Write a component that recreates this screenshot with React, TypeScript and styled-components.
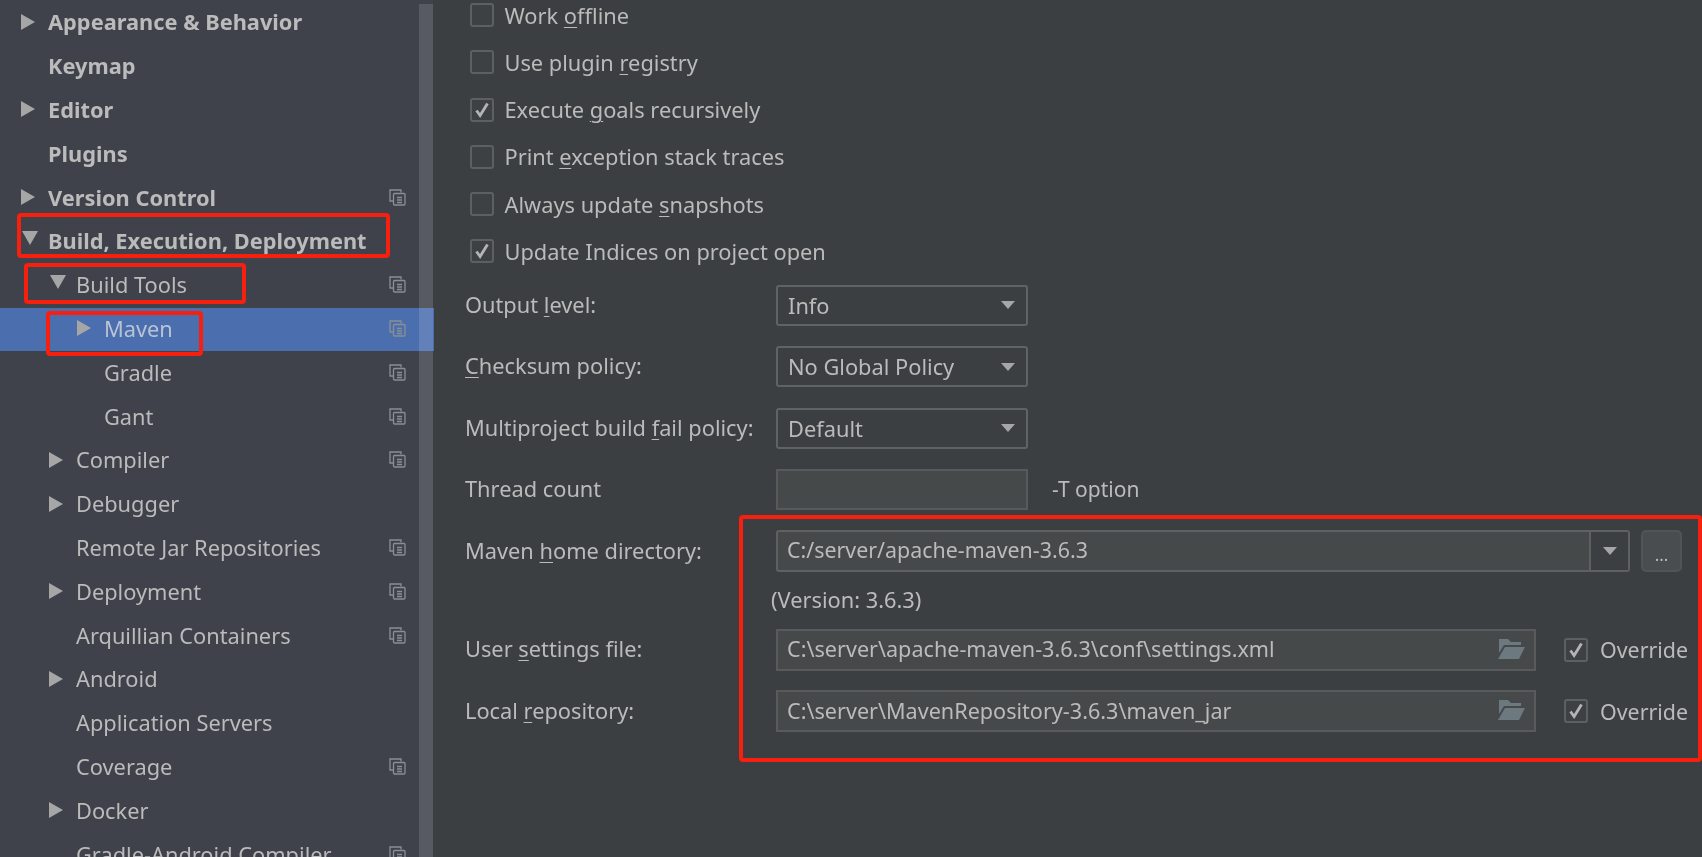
import styled, { createGlobalStyle } from "styled-components";

const GlobalStyle = createGlobalStyle`
    html, body {
        margin: 0;
        height: 100%;
        overflow: hidden;
        background-color: #3c3f41;
    }
`

type TreeItem = {
    label: string
    level: number
    arrow?: "right" | "down"
    copy?: boolean
    selected?: boolean
}

const tree: TreeItem[] = [
    {label: "Appearance & Behavior", level: 0, arrow: "right"},
    {label: "Keymap", level: 0},
    {label: "Editor", level: 0, arrow: "right"},
    {label: "Plugins", level: 0},
    {label: "Version Control", level: 0, arrow: "right", copy: true},
    {label: "Build, Execution, Deployment", level: 0, arrow: "down"},
    {label: "Build Tools", level: 1, arrow: "down", copy: true},
    {label: "Maven", level: 2, arrow: "right", copy: true, selected: true},
    {label: "Gradle", level: 2, copy: true},
    {label: "Gant", level: 2, copy: true},
    {label: "Compiler", level: 1, arrow: "right", copy: true},
    {label: "Debugger", level: 1, arrow: "right"},
    {label: "Remote Jar Repositories", level: 1, copy: true},
    {label: "Deployment", level: 1, arrow: "right", copy: true},
    {label: "Arquillian Containers", level: 1, copy: true},
    {label: "Android", level: 1, arrow: "right"},
    {label: "Application Servers", level: 1},
    {label: "Coverage", level: 1, copy: true},
    {label: "Docker", level: 1, arrow: "right"},
    {label: "Gradle-Android Compiler", level: 1, copy: true},
]

const CopyIcon = () => (
    <CopyGlyph viewBox="0 0 17 17" fill="none" stroke="#8b8e92" strokeWidth="1.3">
        <path d="M12 3.5V1H1v11h3"/>
        <rect x="4.5" y="4.5" width="11.5" height="11.5" rx="1"/>
        <path d="M8 8.5h5M8 11h5M8 13.5h5"/>
    </CopyGlyph>
)

const FolderIcon = () => (
    <FolderGlyph viewBox="0 0 27 20" fill="#6c7a80">
        <path d="M1 0h9l3 3h10v3H6L1 14z"/>
        <path d="M7 8h20l-6 12H0z"/>
    </FolderGlyph>
)

const Check = ({checked}: { checked?: boolean }) => (
    <CheckBox>
        {checked && (
            <svg width="16" height="16" viewBox="0 0 16 16" fill="none" stroke="#b4b4b4" strokeWidth="2.8">
                <path d="M2.5 8.5l3.6 5L13.5 1.5"/>
            </svg>
        )}
    </CheckBox>
)

const Select = ({value}: { value: string }) => (
    <SelectBox>
        <span>{value}</span>
        <Caret/>
    </SelectBox>
)

export default function App() {
    return (
        <Page>
            <GlobalStyle/>
            <Sidebar>
                {tree.map((item) => (
                    <Row key={item.label} $level={item.level} $selected={item.selected}>
                        <ArrowSlot>{item.arrow && <Arrow $down={item.arrow === "down"}/>}</ArrowSlot>
                        <RowLabel $bold={item.level === 0} $selected={item.selected}>{item.label}</RowLabel>
                        {item.copy && <CopyIcon/>}
                    </Row>
                ))}
                <Scrollbar/>
            </Sidebar>

            <Main>
                <CheckList>
                    <CheckRow><Check/><span>Work <u>o</u>ffline</span></CheckRow>
                    <CheckRow><Check/><span>Use plugin <u>r</u>egistry</span></CheckRow>
                    <CheckRow><Check checked/><span>Execute <u>g</u>oals recursively</span></CheckRow>
                    <CheckRow><Check/><span>Print <u>e</u>xception stack traces</span></CheckRow>
                    <CheckRow><Check/><span>Always update <u>s</u>napshots</span></CheckRow>
                    <CheckRow><Check checked/><span>Update Indices on project open</span></CheckRow>
                </CheckList>

                <Form>
                    <FormRow>
                        <Label>Output <u>l</u>evel:</Label>
                        <Select value="Info"/>
                    </FormRow>
                    <FormRow>
                        <Label><u>C</u>hecksum policy:</Label>
                        <Select value="No Global Policy"/>
                    </FormRow>
                    <FormRow>
                        <Label>Multiproject build <u>f</u>ail policy:</Label>
                        <Select value="Default"/>
                    </FormRow>
                    <FormRow>
                        <Label>Thread count</Label>
                        <ThreadInput/>
                        <Hint>-T option</Hint>
                    </FormRow>
                    <FormRow>
                        <Label>Maven <u>h</u>ome directory:</Label>
                        <HomeField>
                            <HomeValue>C:/server/apache-maven-3.6.3</HomeValue>
                            <HomeDrop><Caret/></HomeDrop>
                        </HomeField>
                        <DotsButton>...</DotsButton>
                    </FormRow>
                    <VersionRow>(Version: 3.6.3)</VersionRow>
                    <FormRow>
                        <Label>User <u>s</u>ettings file:</Label>
                        <PathField>
                            <span>C:\server\apache-maven-3.6.3\conf\settings.xml</span>
                            <FolderIcon/>
                        </PathField>
                        <OverrideRow><Check checked/><span>Override</span></OverrideRow>
                    </FormRow>
                    <FormRow>
                        <Label>Local <u>r</u>epository:</Label>
                        <PathField>
                            <span>C:\server\MavenRepository-3.6.3\maven_jar</span>
                            <FolderIcon/>
                        </PathField>
                        <OverrideRow><Check checked/><span>Override</span></OverrideRow>
                    </FormRow>
                </Form>
            </Main>

            <Highlight $x={17} $y={213} $w={373} $h={45}/>
            <Highlight $x={24} $y={263} $w={222} $h={41}/>
            <Highlight $x={46} $y={311} $w={157} $h={45}/>
            <Highlight $x={739} $y={515} $w={963} $h={247}/>
        </Page>
    );
};

const font = `"Noto Sans", "Open Sans", sans-serif`

const Page = styled.div`
    position: relative;
    display: flex;
    width: 1702px;
    height: 857px;
    overflow: hidden;
    background-color: #3c3f41;
    color: #bbbbbb;
    font-family: ${font};
    font-size: 21.8px;
    filter: blur(0.5px);

    u {
        text-underline-offset: 3px;
        text-decoration-thickness: 1px;
    }
`

const Sidebar = styled.nav`
    position: relative;
    flex: 0 0 434px;
    height: 857px;
    padding-top: 1px;
    box-sizing: border-box;
    overflow: hidden;
    background: linear-gradient(to right, #3f424b 433px, #3c3f41 433px);
`

const Row = styled.div<{ $level: number; $selected?: boolean }>`
    display: flex;
    align-items: center;
    box-sizing: border-box;
    height: 43.8px;
    padding-left: ${(p) => 21 + p.$level * 28}px;
    padding-right: 28px;
    padding-bottom: 2px;
    background-color: ${(p) => (p.$selected ? "#4b6eaf" : "transparent")};
`

const ArrowSlot = styled.span`
    display: flex;
    align-items: center;
    flex: 0 0 27px;
`

const Arrow = styled.i<{ $down?: boolean }>`
    display: block;
    width: 0;
    height: 0;
    ${(p) => p.$down
            ? `
        margin-left: 1px;
        border-left: 8px solid transparent;
        border-right: 8px solid transparent;
        border-top: 14px solid #a6a6a6;
        margin-top: -6px;
    `
            : `
        border-top: 8px solid transparent;
        border-bottom: 8px solid transparent;
        border-left: 14px solid #a6a6a6;
    `}
`

const RowLabel = styled.span<{ $bold?: boolean; $selected?: boolean }>`
    font-weight: ${(p) => (p.$bold ? 700 : 400)};
    white-space: nowrap;
    color: ${(p) => (p.$selected ? "#b9c3d4" : "#bbbbbb")};
`

const CopyGlyph = styled.svg`
    flex: 0 0 17px;
    width: 17px;
    height: 17px;
    margin-left: auto;
`

const Scrollbar = styled.div`
    position: absolute;
    top: 4px;
    bottom: 0;
    left: 419px;
    width: 14px;
    background-color: rgba(255, 255, 255, 0.13);
`

const Main = styled.main`
    flex: 1;
    min-width: 0;
    padding-left: 31px;
`

const CheckList = styled.div`
    display: flex;
    flex-direction: column;
    gap: 17.3px;
    padding-left: 5px;
`

const CheckRow = styled.label`
    display: flex;
    align-items: center;
    gap: 10.5px;
    height: 30px;
    white-space: nowrap;
`

const CheckBox = styled.span`
    display: flex;
    align-items: center;
    justify-content: center;
    box-sizing: border-box;
    width: 24px;
    height: 24px;
    border: 2px solid #5d6062;
    border-radius: 3px;
    background-color: #3e4143;
`

const Form = styled.div`
    margin-top: 18px;
    display: flex;
    flex-direction: column;
`

const FormRow = styled.div`
    display: flex;
    align-items: center;
    height: 41.5px;
    margin-bottom: 20px;
    white-space: nowrap;
`

const Label = styled.span`
    flex: 0 0 311px;
    margin-top: -2px;
`

const SelectBox = styled.div`
    display: flex;
    align-items: center;
    justify-content: space-between;
    box-sizing: border-box;
    width: 252px;
    height: 41px;
    padding: 0 11px 0 10px;
    border: 2px solid #606365;
    border-radius: 3px;
    background-color: #3c3f41;
`

const Caret = styled.i`
    display: block;
    width: 0;
    height: 0;
    border-left: 7.5px solid transparent;
    border-right: 7.5px solid transparent;
    border-top: 8px solid #a6a6a6;
`

const ThreadInput = styled.div`
    box-sizing: border-box;
    width: 252px;
    height: 41px;
    border: 2px solid #58595b;
    background-color: #45494a;
`

const Hint = styled.span`
    margin-left: 24px;
    margin-top: -2px;
    font-size: 21px;
`

const HomeField = styled.div`
    display: flex;
    box-sizing: border-box;
    width: 854px;
    height: 42px;
    border: 2px solid #5e6061;
    border-radius: 3px;
    background-color: #45494a;
`

const HomeValue = styled.div`
    flex: 1;
    display: flex;
    align-items: center;
    padding-left: 9px;
    margin-top: -3px;
    font-size: 21.4px;
`

const HomeDrop = styled.div`
    display: flex;
    align-items: center;
    justify-content: center;
    flex: 0 0 37px;
    border-left: 2px solid #5e6061;
    background-color: #3c3f41;
`

const DotsButton = styled.div`
    display: flex;
    align-items: flex-end;
    justify-content: center;
    box-sizing: border-box;
    width: 41px;
    height: 42px;
    margin-left: 11px;
    padding-bottom: 7px;
    border: 2px solid #515456;
    border-radius: 5px;
    background-color: #4a4d4f;
    font-size: 17px;
    line-height: 1;
`

const VersionRow = styled.div`
    height: 44px;
    margin-top: -7px;
    padding-left: 306px;
    line-height: 30px;
`

const PathField = styled.div`
    display: flex;
    align-items: center;
    justify-content: space-between;
    box-sizing: border-box;
    width: 760px;
    height: 42px;
    padding: 0 9px 2px 9px;
    border: 2px solid #585a5b;
    background-color: #45494a;
    font-size: 21.6px;
`

const FolderGlyph = styled.svg`
    width: 27px;
    height: 20px;
`

const OverrideRow = styled.label`
    display: flex;
    align-items: center;
    gap: 12px;
    margin-left: 28px;
    font-size: 21.4px;
`

const Highlight = styled.div<{ $x: number; $y: number; $w: number; $h: number }>`
    position: absolute;
    left: ${(p) => p.$x}px;
    top: ${(p) => p.$y}px;
    width: ${(p) => p.$w}px;
    height: ${(p) => p.$h}px;
    box-sizing: border-box;
    border: 4.5px solid #f7200f;
    border-radius: 4px;
`
